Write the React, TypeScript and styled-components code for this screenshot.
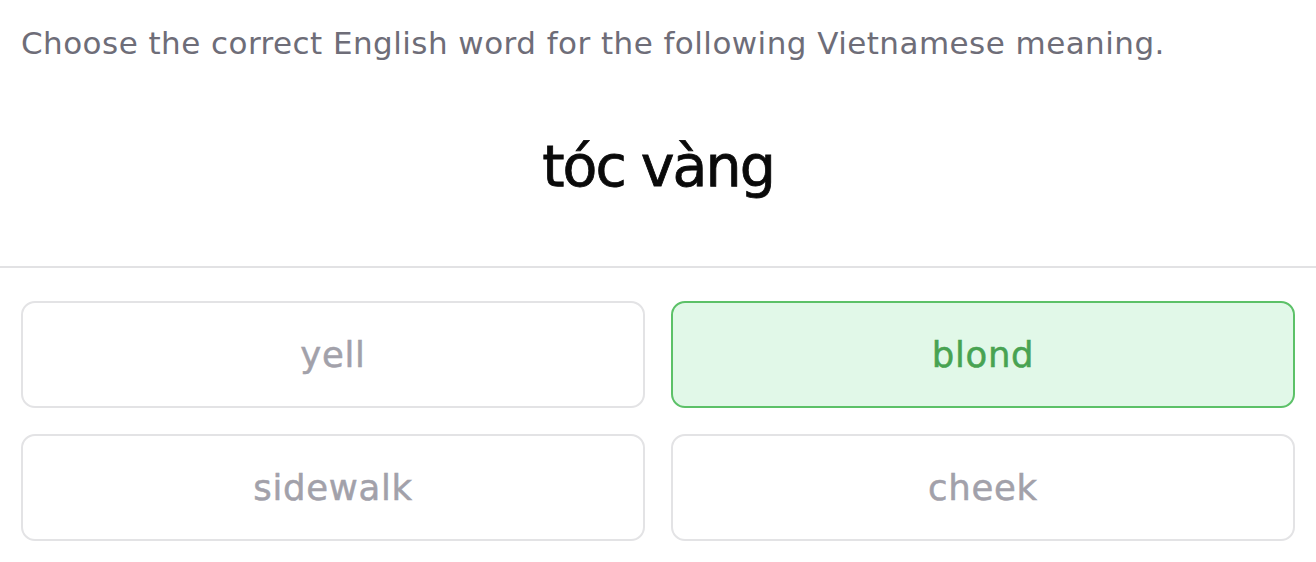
import React from "react";
import styled, { createGlobalStyle } from "styled-components";

const Global = createGlobalStyle`
  html, body { margin: 0; padding: 0; background: #ffffff; }
  body { font-family: "DejaVu Sans", "Noto Sans", sans-serif; }
`;

const Page = styled.div`
  width: 1316px;
  display: flex;
  flex-direction: column;
`;

const Prompt = styled.div`
  padding: 24px 21px 0;
  font-size: 31px;
  line-height: 38px;
  letter-spacing: 0.45px;
  color: #6e6d78;
  font-weight: 400;
`;

const Word = styled.div`
  margin-top: 64px;
  text-align: center;
  font-size: 57px;
  line-height: 80px;
  font-weight: 500;
  color: #0a0a0a;
  letter-spacing: -2px;
  -webkit-text-stroke: 0.8px #0a0a0a;
`;

const Divider = styled.hr`
  margin: 60px 0 0;
  border: none;
  border-top: 2px solid #e2e2e4;
`;

const Grid = styled.div`
  display: grid;
  grid-template-columns: 1fr 1fr;
  gap: 26px;
  padding: 33px 21px 0;
`;

const Option = styled.button<{ $correct?: boolean }>`
  height: 107px;
  box-sizing: border-box;
  border-radius: 14px;
  border: 2px solid ${(p) => (p.$correct ? "#5cc168" : "#e3e3e5")};
  background: ${(p) => (p.$correct ? "#e1f8e8" : "#ffffff")};
  color: ${(p) => (p.$correct ? "#48a352" : "#a2a1aa")};
  -webkit-text-stroke: 0.5px currentColor;
  font-family: "DejaVu Sans", "Noto Sans", sans-serif;
  font-size: 35.5px;
  letter-spacing: 0.7px;
  font-weight: 500;
  display: flex;
  align-items: center;
  justify-content: center;
  padding: 0;
`;

const options = [
  { text: "yell", correct: false },
  { text: "blond", correct: true },
  { text: "sidewalk", correct: false },
  { text: "cheek", correct: false },
];

export default function App() {
  return (
    <Page>
      <Global />
      <Prompt>Choose the correct English word for the following Vietnamese meaning.</Prompt>
      <Word>tóc vàng</Word>
      <Divider />
      <Grid>
        {options.map((o) => (
          <Option key={o.text} $correct={o.correct}>
            {o.text}
          </Option>
        ))}
      </Grid>
    </Page>
  );
}
